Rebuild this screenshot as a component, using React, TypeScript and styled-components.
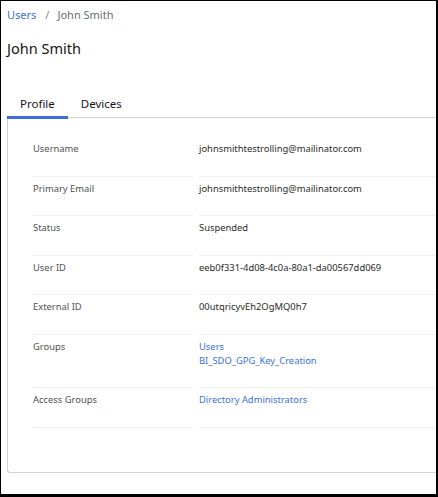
import React from 'react';
import styled, {createGlobalStyle} from 'styled-components';

const GlobalStyle = createGlobalStyle`
    html, body {
        margin: 0;
        padding: 0;
        background: #ffffff;
    }
    body {
        font-family: "Noto Sans", "Liberation Sans", sans-serif;
        color: #151515;
    }
`;

type Field = {
    label: string;
    values: string[];
    link?: boolean;
};

const fields: Field[] = [
    {label: 'Username', values: ['johnsmithtestrolling@mailinator.com']},
    {label: 'Primary Email', values: ['johnsmithtestrolling@mailinator.com']},
    {label: 'Status', values: ['Suspended']},
    {label: 'User ID', values: ['eeb0f331-4d08-4c0a-80a1-da00567dd069']},
    {label: 'External ID', values: ['00utqricyvEh2OgMQ0h7']},
    {label: 'Groups', values: ['Users', 'BI_SDO_GPG_Key_Creation'], link: true},
    {label: 'Access Groups', values: ['Directory Administrators'], link: true},
];

const tabs = ['Profile', 'Devices'];

const App: React.FunctionComponent = () => {
    const [active, setActive] = React.useState(0);
    return (
        <>
            <GlobalStyle/>
            <Frame>
                <Breadcrumb>
                    <CrumbLink href="#">Users</CrumbLink>
                    <Divider>/</Divider>
                    <Current>John Smith</Current>
                </Breadcrumb>
                <Title>John Smith</Title>
                <TabBar>
                    {tabs.map((t, i) => (
                        <Tab key={t} $active={i === active} onClick={() => setActive(i)}>{t}</Tab>
                    ))}
                </TabBar>
                <Card>
                    <FieldList>
                        {fields.map((f) => (
                            <React.Fragment key={f.label}>
                                <Label>{f.label}</Label>
                                <Value>
                                    {f.values.map((v) => f.link ? (
                                        <ValueLink key={v} href="#">{v}</ValueLink>
                                    ) : (
                                        <span key={v}>{v}</span>
                                    ))}
                                </Value>
                            </React.Fragment>
                        ))}
                    </FieldList>
                </Card>
            </Frame>
        </>
    );
}

const Frame = styled.div`
    width: 438px;
    height: 497px;
    box-sizing: border-box;
    border-style: solid;
    border-color: #000000;
    border-width: 1px 2px 3px 1px;
    overflow: hidden;
    padding: 6px 0 0 6px;
    background: #ffffff;
`;

const Breadcrumb = styled.nav`
    display: flex;
    align-items: center;
    font-size: 11px;
    line-height: 16px;
    height: 16px;
`;

const CrumbLink = styled.a`
    color: #3b73d9;
    text-decoration: none;
`;

const Divider = styled.span`
    color: #8a8d90;
    margin: 0 8px 0 9px;
`;

const Current = styled.span`
    color: #6a6e73;
`;

const Title = styled.h1`
    margin: 15px 0 0;
    font-size: 14.5px;
    line-height: 20px;
    font-weight: 400;
    color: #151515;
`;

const TabBar = styled.div`
    display: flex;
    margin-top: 33px;
    border-bottom: 1px solid #d2d2d2;
`;

const Tab = styled.button<{ $active: boolean }>`
    position: relative;
    border: none;
    background: none;
    padding: 5px 13px;
    font-family: inherit;
    font-size: 11.5px;
    line-height: 16px;
    color: #151515;
    cursor: pointer;
    &::after {
        content: '';
        display: ${(p) => (p.$active ? 'block' : 'none')};
        position: absolute;
        left: 0;
        right: 0;
        bottom: -2px;
        height: 3px;
        background: #3d6fd6;
    }
`;

const Card = styled.div`
    border-left: 1px solid #d2d2d2;
    border-bottom: 1px solid #d2d2d2;
    border-bottom-left-radius: 3px;
    padding: 19px 0 44px 25px;
`;

const FieldList = styled.div`
    display: grid;
    grid-template-columns: 160px 1fr;
    column-gap: 6px;
    font-size: 9.4px;
    line-height: 14px;
`;

const Label = styled.div`
    padding: 5px 0 19.5px;
    border-bottom: 1px solid #efefef;
    color: #4f5255;
`;

const Value = styled.div`
    display: flex;
    flex-direction: column;
    padding: 5px 0 19.5px;
    border-bottom: 1px solid #efefef;
    color: #2b2b2b;
`;

const ValueLink = styled.a`
    color: #3b73d9;
    text-decoration: none;
`;

export default App;
